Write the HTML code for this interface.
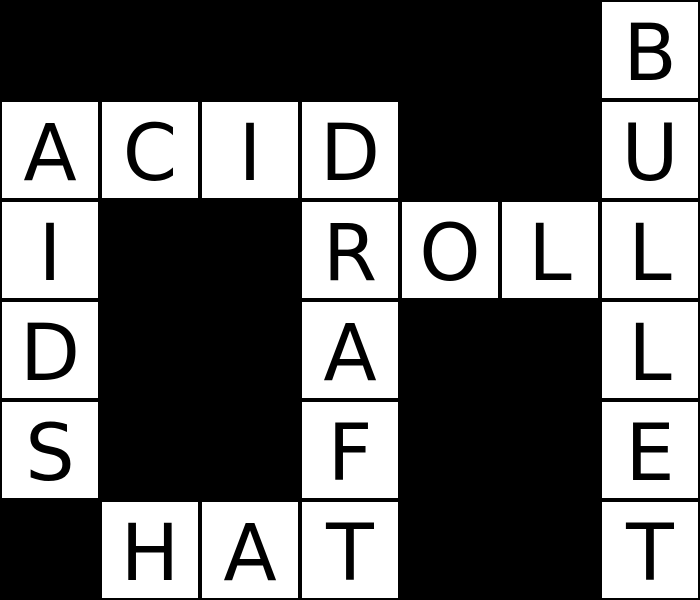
<!DOCTYPE html>
<html><head><style>
html,body{margin:0;padding:0;background:#000;width:700px;height:600px;overflow:hidden}
.c{position:absolute;width:96px;height:96px;background:#fff;display:flex;align-items:center;justify-content:center;font-family:"DejaVu Sans",sans-serif;font-size:78px;line-height:1;color:#000;padding-top:8px;box-sizing:border-box}
</style></head><body>
<div class="c" style="left:602px;top:2px">B</div>
<div class="c" style="left:2px;top:102px">A</div>
<div class="c" style="left:102px;top:102px">C</div>
<div class="c" style="left:202px;top:102px">I</div>
<div class="c" style="left:302px;top:102px">D</div>
<div class="c" style="left:602px;top:102px">U</div>
<div class="c" style="left:2px;top:202px">I</div>
<div class="c" style="left:302px;top:202px">R</div>
<div class="c" style="left:402px;top:202px">O</div>
<div class="c" style="left:502px;top:202px">L</div>
<div class="c" style="left:602px;top:202px">L</div>
<div class="c" style="left:2px;top:302px">D</div>
<div class="c" style="left:302px;top:302px">A</div>
<div class="c" style="left:602px;top:302px">L</div>
<div class="c" style="left:2px;top:402px">S</div>
<div class="c" style="left:302px;top:402px">F</div>
<div class="c" style="left:602px;top:402px">E</div>
<div class="c" style="left:102px;top:502px">H</div>
<div class="c" style="left:202px;top:502px">A</div>
<div class="c" style="left:302px;top:502px">T</div>
<div class="c" style="left:602px;top:502px">T</div>
</body></html>
